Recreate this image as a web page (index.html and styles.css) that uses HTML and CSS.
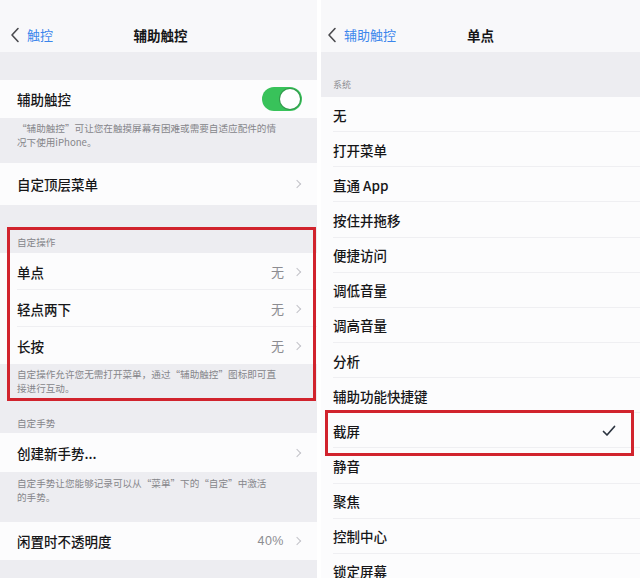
FILE: index.html
```html
<!DOCTYPE html>
<html lang="zh-CN">
<head>
<meta charset="utf-8">
<title>辅助触控</title>
<link rel="stylesheet" href="styles.css">
</head>
<body>
<div class="screen">
  <section class="panel left">
    <header class="nav">
      <span class="back"><svg class="back-ico" viewBox="0 0 10 16" width="10" height="16"><path d="M8 1.5 L2 8 L8 14.5" fill="none" stroke="#4a4a4e" stroke-width="1.6" stroke-linecap="round" stroke-linejoin="round"/></svg><span class="back-text">触控</span></span>
      <span class="title">辅助触控</span>
    </header>
    <div class="band band-top"></div>
    <div class="row row-toggle"><span class="label">辅助触控</span><span class="toggle"><span class="knob"></span></span></div>
    <div class="foot foot1">“辅助触控”可让您在触摸屏幕有困难或需要自适应配件的情<br>况下使用iPhone。</div>
    <div class="row row-menu"><span class="label">自定顶层菜单</span><span class="chev"></span></div>
    <div class="head head1">自定操作</div>
    <div class="row row-act sep"><span class="label">单点</span><span class="val">无</span><span class="chev"></span></div>
    <div class="row row-act sep"><span class="label">轻点两下</span><span class="val">无</span><span class="chev"></span></div>
    <div class="row row-act"><span class="label">长按</span><span class="val">无</span><span class="chev"></span></div>
    <div class="foot foot2">自定操作允许您无需打开菜单，通过“辅助触控”图标即可直<br>接进行互动。</div>
    <div class="head head2">自定手势</div>
    <div class="row row-new"><span class="label">创建新手势...</span><span class="chev"></span></div>
    <div class="foot foot3">自定手势让您能够记录可以从“菜单”下的“自定”中激活<br>的手势。</div>
    <div class="row row-idle"><span class="label">闲置时不透明度</span><span class="val val-pct">40%</span><span class="chev"></span></div>
    <div class="band band-end"></div>
    <div class="mark mark-left"></div>
  </section>

  <section class="panel right">
    <header class="nav">
      <span class="back"><svg class="back-ico" viewBox="0 0 10 16" width="10" height="16"><path d="M8 1.5 L2 8 L8 14.5" fill="none" stroke="#4a4a4e" stroke-width="1.6" stroke-linecap="round" stroke-linejoin="round"/></svg><span class="back-text">辅助触控</span></span>
      <span class="title">单点</span>
    </header>
    <div class="head head-sys">系统</div>
    <ul class="list">
      <li class="item">无</li>
      <li class="item">打开菜单</li>
      <li class="item">直通 App</li>
      <li class="item">按住并拖移</li>
      <li class="item">便捷访问</li>
      <li class="item">调低音量</li>
      <li class="item">调高音量</li>
      <li class="item">分析</li>
      <li class="item">辅助功能快捷键</li>
      <li class="item checked">截屏<svg class="check" viewBox="0 0 14 12" width="14" height="12"><path d="M1.5 6.5 L5 10 L12.5 1.5" fill="none" stroke="#2c3440" stroke-width="1.7" stroke-linecap="round" stroke-linejoin="round"/></svg></li>
      <li class="item">静音</li>
      <li class="item">聚焦</li>
      <li class="item">控制中心</li>
      <li class="item">锁定屏幕</li>
    </ul>
    <div class="mark mark-right"></div>
  </section>
</div>
</body>
</html>
```

FILE: styles.css
```css
html, body {
  margin: 0;
  padding: 0;
  background: #ffffff;
}
body {
  width: 640px;
  height: 578px;
  overflow: hidden;
  font-family: "Noto Sans CJK SC", "Noto Sans", sans-serif;
  color: #161618;
}
.screen {
  display: grid;
  grid-template-columns: 317px 319px;
  column-gap: 4px;
  height: 578px;
}
.panel {
  position: relative;
  display: flex;
  flex-direction: column;
  background: #ededf1;
  overflow: hidden;
}
.nav {
  position: relative;
  height: 52px;
  flex: none;
  background: #f8f8fa;
  display: flex;
  align-items: center;
  padding-top: 18px;
  box-sizing: border-box;
}
.back {
  display: flex;
  align-items: center;
  gap: 7px;
  padding-left: 10px;
  font-size: 13px;
  color: #3b86ec;
  line-height: 16px;
}
.right .back { padding-left: 6px; }
.back-ico { display: block; }
.title {
  position: absolute;
  left: 0;
  right: 0;
  top: 18px;
  bottom: 0;
  display: flex;
  align-items: center;
  justify-content: center;
  font-size: 13.5px;
  font-weight: 700;
  pointer-events: none;
}
.left .title { padding-left: 4px; }
.band-top { height: 28px; flex: none; }
.band-end { flex: 1; }
.row {
  position: relative;
  display: flex;
  align-items: center;
  padding: 0 15px 0 17px;
  background: #fcfcfd;
  font-size: 13.5px;
  font-weight: 500;
  flex: none;
}
.row .label { flex: 1; }
.row.sep::after {
  content: "";
  position: absolute;
  left: 17px;
  right: 0;
  bottom: 0;
  height: 1px;
  background: #efeff2;
}
.row-toggle { height: 38px; padding-right: 15px; }
.row-menu { height: 42px; }
.row-act { height: 37px; }
.row-new { height: 39px; }
.row-idle { height: 38px; }
.val {
  font-size: 13px;
  color: #8c8c91;
  margin-right: 10px;
  font-weight: 400;
}
.val-pct {
  font-family: "Liberation Sans", "Noto Sans", sans-serif;
  font-size: 12.5px;
  letter-spacing: 0.5px;
}
.chev {
  width: 5px;
  height: 5px;
  border-top: 1.3px solid #c3c3c8;
  border-right: 1.3px solid #c3c3c8;
  transform: rotate(45deg);
  margin-right: 2px;
}
.toggle {
  width: 40px;
  height: 24px;
  border-radius: 12px;
  background: #38c25a;
  position: relative;
}
.knob {
  position: absolute;
  right: 2px;
  top: 2px;
  width: 20px;
  height: 20px;
  border-radius: 50%;
  background: #ffffff;
  box-shadow: 0 0 0 1px rgba(40, 80, 50, 0.35);
}
.foot {
  font-size: 9.6px;
  line-height: 14px;
  color: #85858a;
  padding: 3px 10px 0 17px;
  flex: none;
  white-space: nowrap;
}
.foot1 { padding-bottom: 14px; }
.foot2 { padding-bottom: 0; }
.foot3 { padding-top: 4px; padding-bottom: 18px; }
.head {
  font-size: 9.6px;
  line-height: 12px;
  color: #85858a;
  padding: 0 17px;
  flex: none;
}
.head1 { padding-top: 31px; padding-bottom: 5px; }
.head2 { padding-top: 22px; padding-bottom: 4px; }
.head-sys { padding: 27px 12px 6px; font-size: 9px; color: #8e8e93; }
.list {
  list-style: none;
  margin: 0;
  padding: 0;
  background: #fcfcfd;
  flex: 1;
}
.item {
  position: relative;
  height: 35.15px;
  display: flex;
  align-items: center;
  padding: 0 24px 0 12px;
  font-size: 13.5px;
  font-weight: 500;
}
.item::after {
  content: "";
  position: absolute;
  left: 12px;
  right: 0;
  bottom: 0;
  height: 1px;
  background: #efeff2;
}
.item.checked { justify-content: space-between; }
.check { display: block; }
.mark {
  position: absolute;
  border: 3px solid #d1232d;
  box-sizing: border-box;
  pointer-events: none;
}
.mark-left {
  left: 7px;
  top: 227px;
  width: 309px;
  height: 174px;
}
.mark-right {
  left: 4px;
  top: 410px;
  width: 309px;
  height: 46px;
}
```
